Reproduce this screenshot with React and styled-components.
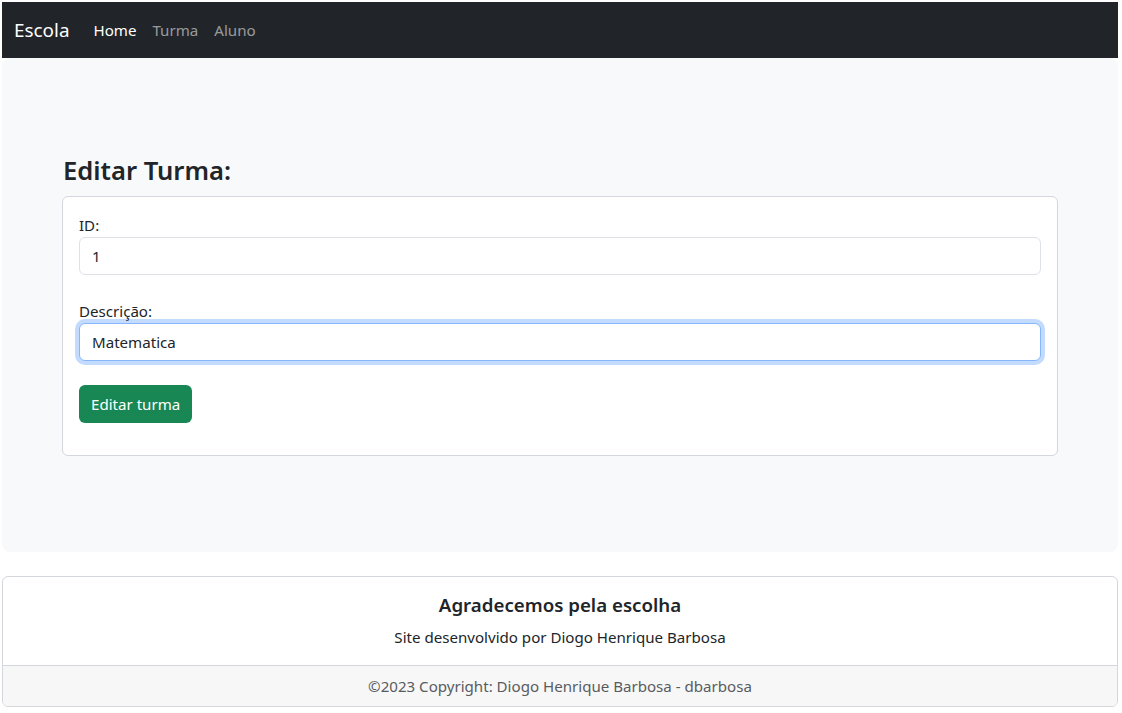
import React, { useEffect, useRef, useState } from "react";
import styled, { createGlobalStyle } from "styled-components";

const GlobalStyle = createGlobalStyle`
  * { box-sizing: border-box; }
  body {
    margin: 2px 4px 2px 2px;
    font-family: "Noto Sans", "Open Sans", sans-serif;
    font-size: 15.1px;
    line-height: 24px;
    color: #212529;
    background: #fff;
  }
`;

const Navbar = styled.nav`
  display: flex;
  align-items: center;
  height: 56px;
  padding: 0 12px;
  background: #212529;
`;

const Brand = styled.a`
  font-size: 18.9px;
  color: #fff;
  margin-right: 16px;
  text-decoration: none;
`;

const NavLink = styled.a`
  padding: 8px;
  color: ${(p) => (p.$active ? "#fff" : "rgba(255,255,255,.55)")};
  text-decoration: none;
`;

const Jumbotron = styled.main`
  background: #f8f9fa;
  border-radius: 8px;
  padding: 96px 60px;
`;

const Title = styled.h3`
  font-size: 25.6px;
  font-weight: 600;
  line-height: 33.6px;
  margin: 0 0 8px 1px;
`;

const Card = styled.div`
  background: #fff;
  border: 1px solid #d3d6da;
  border-radius: 6px;
`;

const CardBody = styled.div`
  padding: 16px;
`;

const Group = styled.div`
  margin-bottom: 24px;
`;

const Label = styled.label`
  display: block;
`;

const Input = styled.input`
  display: block;
  width: 100%;
  height: 38px;
  padding: 6px 12px;
  font: inherit;
  color: #212529;
  background: #fff;
  border: 1px solid ${(p) => (p.$focused ? "#86b7fe" : "#dee2e6")};
  border-radius: 6px;
  outline: 0;
  box-shadow: ${(p) => (p.$focused ? "0 0 0 4px rgba(13,110,253,.25)" : "none")};
  caret-color: #000;
`;

const Button = styled.button`
  font: inherit;
  color: #fff;
  background: #198754;
  border: 0;
  border-radius: 6px;
  height: 38px;
  padding: 0 12px;
  margin-bottom: 16px;
`;

const Footer = styled.footer`
  margin-top: 24px;
  border: 1px solid #d3d6da;
  border-radius: 6px;
  text-align: center;
  overflow: hidden;
`;

const FooterBody = styled.div`
  padding: 16px;
`;

const FooterTitle = styled.h5`
  font-size: 18.7px;
  font-weight: 600;
  line-height: 24px;
  margin: 0 0 8px;
`;

const FooterText = styled.p`
  margin: 0;
`;

const Copyright = styled.div`
  padding: 8px 16px;
  border-top: 1px solid #d3d6da;
  background: #f7f7f7;
  color: #595c5f;
`;

export default function App() {
  const [id, setId] = useState("1");
  const [descricao, setDescricao] = useState("Matematica");
  const ref = useRef(null);

  useEffect(() => {
    const el = ref.current;
    if (el) {
      el.focus();
      el.setSelectionRange(el.value.length, el.value.length);
    }
  }, []);

  return (
    <>
      <GlobalStyle />
      <Navbar>
        <Brand href="#">Escola</Brand>
        <NavLink href="#" $active>Home</NavLink>
        <NavLink href="#">Turma</NavLink>
        <NavLink href="#">Aluno</NavLink>
      </Navbar>
      <Jumbotron>
        <Title>Editar Turma:</Title>
        <Card>
          <CardBody>
            <Group>
              <Label>ID:</Label>
              <Input value={id} onChange={(e) => setId(e.target.value)} />
            </Group>
            <Group>
              <Label>Descrição:</Label>
              <Input
                ref={ref}
                $focused
                value={descricao}
                onChange={(e) => setDescricao(e.target.value)}
              />
            </Group>
            <Button type="button">Editar turma</Button>
          </CardBody>
        </Card>
      </Jumbotron>
      <Footer>
        <FooterBody>
          <FooterTitle>Agradecemos pela escolha</FooterTitle>
          <FooterText>Site desenvolvido por Diogo Henrique Barbosa</FooterText>
        </FooterBody>
        <Copyright>©2023 Copyright: Diogo Henrique Barbosa - dbarbosa</Copyright>
      </Footer>
    </>
  );
}
